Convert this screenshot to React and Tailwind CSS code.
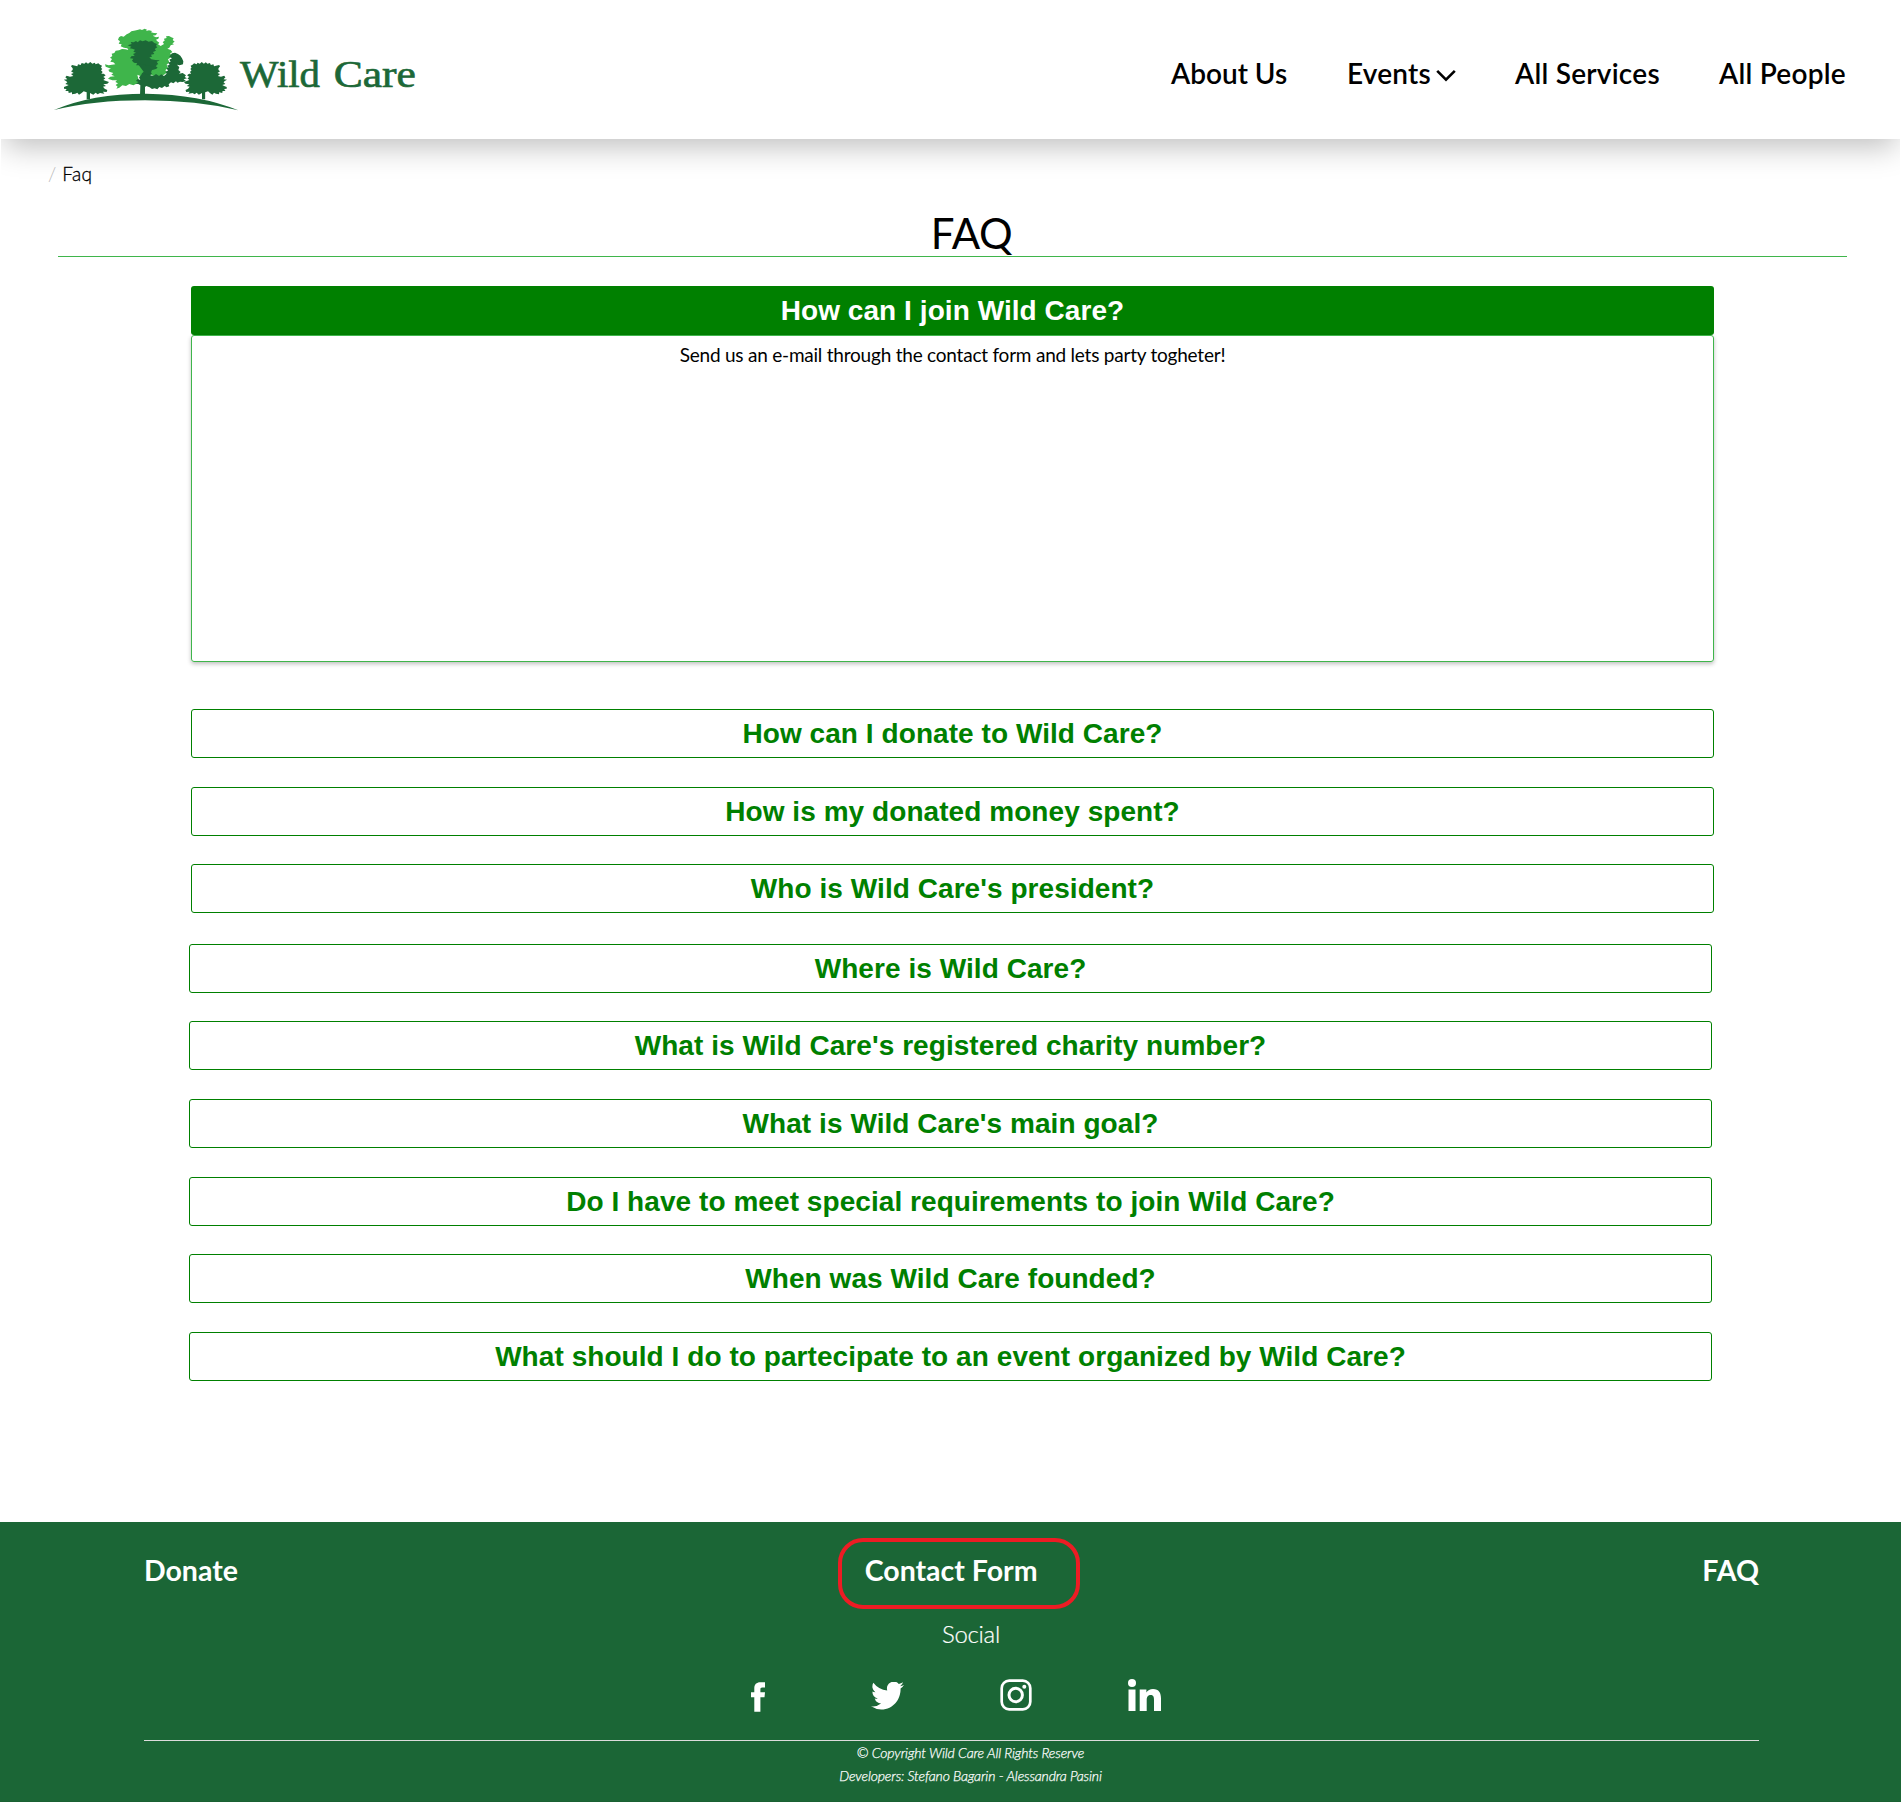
import React from "react";

const firstGroup = [
  { q: "How can I donate to Wild Care?", gap: "mt-[47px]" },
  { q: "How is my donated money spent?", gap: "mt-[29px]" },
  { q: "Who is Wild Care's president?", gap: "mt-7" },
];

const secondGroup = [
  { q: "Where is Wild Care?", gap: "mt-[31px]" },
  { q: "What is Wild Care's registered charity number?", gap: "mt-7" },
  { q: "What is Wild Care's main goal?", gap: "mt-[29px]" },
  { q: "Do I have to meet special requirements to join Wild Care?", gap: "mt-[29px]" },
  { q: "When was Wild Care founded?", gap: "mt-7" },
  { q: "What should I do to partecipate to an event organized by Wild Care?", gap: "mt-[29px]" },
];

const SMALL_TREE =
  "M68 133 L63 127 L66 123 L76 125 L82 127 L84 121 L92 123 L95 117 L103 119 L108 115 L114 119 L121 114 L127 119 L134 116 L137 121 L145 118 L150 122 L156 125 L153 131 L157 135 L153 139 L158 144 L154 149 L161 149 L167 154 L160 159 L166 163 L160 168 L168 171 L177 174 L172 179 L160 181 L168 186 L159 188 L164 194 L172 198 L170 204 L159 203 L163 209 L150 207 L143 211 L137 206 L130 212 L120 207 L120 226 L110 226 L110 205 L101 202 L94 208 L87 212 L82 206 L76 209 L66 211 L66 205 L56 207 L55 201 L46 201 L50 195 L42 194 L42 189 L50 186 L56 183 L46 180 L52 175 L48 171 L41 167 L52 166 L46 160 L50 155 L60 158 L70 156 L63 150 L71 147 L63 142 L68 138 Z";

function Logo() {
  return (
    <svg className="h-[90px] w-[370px]" viewBox="0 0 1110 270">
      <path
        fill="#3fb54b"
        d="M207 40 L213 36 L221 38 L230 31 L238 27 L244 22 L252 20 L262 18 L270 16 L276 18 L284 14 L291 17 L288 21 L297 19 L306 21 L303 25 L312 27 L322 28 L317 34 L308 35 L318 40 L327 38 L325 44 L318 47 L322 52 L328 56 L324 61 L332 66 L342 60 L338 54 L344 50 L342 44 L350 42 L348 37 L357 36 L364 40 L371 43 L368 48 L374 53 L367 58 L372 61 L362 64 L358 71 L352 74 L362 78 L367 84 L360 89 L366 94 L361 101 L354 106 L358 115 L350 122 L354 132 L346 138 L350 146 L342 152 L331 156 L316 160 L300 150 L290 158 L280 160 L262 152 L266 168 L270 176 L258 180 L250 184 L238 180 L228 186 L217 184 L208 191 L199 194 L203 188 L197 183 L204 178 L196 174 L201 169 L187 169 L174 164 L181 158 L194 157 L184 152 L190 147 L178 143 L175 137 L183 134 L167 128 L165 121 L176 124 L186 122 L196 121 L190 115 L181 113 L186 105 L180 101 L187 96 L185 89 L193 87 L197 80 L207 79 L216 75 L226 76 L235 78 L232 73 L222 71 L212 67 L215 61 L206 59 L210 52 L204 47 Z"
      />
      <path
        fill="#1c6837"
        d="M233 64 L245 60 L242 54 L251 55 L258 51 L263 55 L270 49 L278 52 L287 49 L296 53 L306 51 L313 57 L321 60 L318 66 L322 70 L314 75 L318 80 L309 84 L313 90 L303 92 L306 98 L298 100 L304 106 L316 108 L329 109 L324 116 L331 119 L320 122 L326 128 L314 128 L318 134 L307 136 L298 131 L292 134 L284 128 L275 130 L268 124 L258 124 L262 118 L252 116 L246 110 L250 104 L240 103 L244 97 L254 95 L249 90 L258 86 L250 83 L255 77 L247 74 L239 73 L244 68 Z"
      />
      <path
        fill="#1c6837"
        d="M361 94 L366 88 L375 86 L384 90 L391 95 L396 103 L400 112 L399 121 L389 124 L381 122 L388 130 L385 138 L392 144 L387 149 L398 147 L408 154 L404 159 L411 163 L401 166 L408 171 L398 174 L390 173 L382 176 L378 172 L370 178 L363 175 L356 181 L358 187 L350 190 L344 186 L336 192 L328 189 L322 196 L314 193 L306 195 L299 190 L289 186 L285 189 L285 216 L270 216 L271 184 L265 180 L257 179 L266 174 L258 171 L263 165 L271 168 L267 160 L273 154 L276 148 L283 142 L292 146 L298 142 L306 148 L301 154 L310 156 L318 150 L327 156 L334 151 L342 156 L350 149 L345 143 L354 140 L350 133 L356 130 L351 125 L359 122 L354 116 L362 113 L358 107 L366 103 L358 98 Z"
      />
      <path fill="#1c6837" d="M262 118 L312 128 L330 120 L322 134 L306 138 L300 152 L286 150 Z" />
      <path fill="#3fb54b" d="M320 113 L331 109 L342 112 L338 118 L346 122 L340 128 L351 132 L344 138 L349 145 L340 149 L332 146 L328 150 L320 146 L326 140 L315 137 L323 131 L317 126 L325 121 Z" />
      <path fill="#1c6837" d={SMALL_TREE} />
      <path fill="#1c6837" transform="translate(570 0) scale(-0.95 1)" d={SMALL_TREE} />
      <path fill="#1c6837" d="M12 258 Q125 209 288 209 Q450 211 565 259 Q440 229 285 229 Q130 229 12 258 Z" />
      <g fill="#1c6837" stroke="#1c6837" fontFamily="'Liberation Serif', serif" fontSize="116">
        <text x="570" y="189" textLength="240" lengthAdjust="spacingAndGlyphs" strokeWidth="2">Wild</text>
        <text x="851" y="189" textLength="247" lengthAdjust="spacingAndGlyphs" strokeWidth="2">Care</text>
      </g>
    </svg>
  );
}

function Question({ text, gap }) {
  return (
    <button
      className={`${gap} flex h-[49px] w-full items-center justify-center rounded-[3px] border border-[#008000] font-['Liberation_Sans',Arial,sans-serif] text-[28px] leading-8 font-bold tracking-[0.06px] text-[#008000]`}
    >
      {text}
    </button>
  );
}

function Facebook() {
  return (
    <svg className="h-[30px] w-[14px]" viewBox="0 0 14 30" fill="#fff">
      <path d="M14 .3V5.600H11.200C9.800 5.600 9.400 6.300 9.400 7.400V10.300H14L13.500 15.300H9.400V29.700H3.300V15.300H0V10.300H3.300V6.500C3.300 2.400 5.400.3 9.400.3Z" />
    </svg>
  );
}

function Twitter() {
  return (
    <svg className="h-[28px] w-[33px]" viewBox="0 2.500 24 19.600" preserveAspectRatio="none" fill="#fff">
      <path d="M24 4.600a10 10 0 0 1-2.800.8 4.900 4.900 0 0 0 2.100-2.700 9.900 9.900 0 0 1-3.100 1.200A4.900 4.900 0 0 0 11.800 8.400 14 14 0 0 1 1.700 3.100a4.900 4.900 0 0 0 1.500 6.600 4.900 4.900 0 0 1-2.200-.6v.1a4.900 4.900 0 0 0 3.900 4.800 5 5 0 0 1-2.200.1 4.900 4.900 0 0 0 4.600 3.400A9.900 9.900 0 0 1 0 19.500a14 14 0 0 0 7.500 2.200c9.100 0 14-7.500 14-14v-.6A10 10 0 0 0 24 4.600Z" />
    </svg>
  );
}

function Instagram() {
  return (
    <svg className="size-8" viewBox="0 0 32 32" fill="none" stroke="#fff" strokeWidth="2.700">
      <rect x="1.700" y="1.700" width="28.600" height="28.600" rx="7.500" />
      <circle cx="15.700" cy="16" r="6.700" strokeWidth="3" />
      <circle cx="24.300" cy="7.700" r="2" fill="#fff" stroke="none" />
    </svg>
  );
}

function Linkedin() {
  return (
    <svg className="h-8 w-[33px]" viewBox="0 0 33 32" fill="#fff">
      <circle cx="4" cy="4" r="4" />
      <path d="M.5 10.500H7.500V32H.5ZM11.700 10.500H18.400V13.400C19.700 11.200 22 9.900 25 9.900C31 9.900 33 13.700 33 19.600V32H26V21C26 18.100 25.600 15.900 22.700 15.900C19.700 15.900 18.700 18.100 18.700 21V32H11.700Z" />
    </svg>
  );
}

export default function App() {
  return (
    <div className="flex h-[1813px] w-[1901px] flex-col overflow-hidden bg-white font-[Lato,sans-serif] text-black">
      <div className="h-[190px] px-px">
        <div className="h-[190px] overflow-hidden">
          <header className="flex h-[139px] items-start justify-between bg-white pt-6 pr-[54px] pl-[49px] shadow-[0_12px_28px_-4px_rgba(0,0,0,0.25)]">
            <Logo />
            <nav className="flex pt-8 text-[28px] leading-[34px] font-semibold whitespace-nowrap">
              <a className="w-44">About Us</a>
              <a className="flex w-[168px] items-center tracking-[0.200px]">
                Events
                <svg className="mt-1 ml-[5px] h-[13px] w-5" viewBox="0 0 20 13" fill="none" stroke="#000" strokeWidth="2.600">
                  <path d="M1.200 1.800 L10 10.600 L18.800 1.800" />
                </svg>
              </a>
              <a className="w-[204px] tracking-[0.240px]">All Services</a>
              <a className="w-[127px] tracking-[0.240px]">All People</a>
            </nav>
          </header>
          <div className="flex gap-[6px] pt-[23px] pl-[47px] text-[19px] leading-6 font-light">
            <span className="text-[#b5b5b5]">/</span>
            <span className="tracking-[0.400px] [-webkit-text-stroke:0.300px_#000]">Faq</span>
          </div>
        </div>
      </div>

      <main className="h-[1332px]">
        <h1 className="mr-[54px] ml-[58px] h-[67px] border-b border-[#3fb54b] pt-[19px] pl-[38px] text-center text-[42px] leading-[49px] tracking-[-0.300px]">
          FAQ
        </h1>
        <section className="mt-[29px] ml-[191px] w-[1523px]">
          <button className="flex h-[49px] w-full items-center justify-center rounded-[3px] bg-[#008000] font-['Liberation_Sans',Arial,sans-serif] text-[28px] leading-8 font-bold tracking-[0.060px] text-white">
            How can I join Wild Care?
          </button>
          <div className="h-[327px] rounded-[3px] border border-[#3fb54b] pt-2 text-center text-[19px] leading-[22px] tracking-[-0.220px] shadow-[0_2px_4px_rgba(0,0,0,0.25)]">
            Send us an e-mail through the contact form and lets party togheter!
          </div>
          {firstGroup.map((item) => (
            <Question key={item.q} text={item.q} gap={item.gap} />
          ))}
        </section>
        <section className="ml-[189px] w-[1523px]">
          {secondGroup.map((item) => (
            <Question key={item.q} text={item.q} gap={item.gap} />
          ))}
        </section>
      </main>

      <footer className="h-[280px] border-b border-[#1a6133] bg-[#1b6636] pr-[142px] pl-36 text-white">
        <div className="relative flex h-[94px] justify-between pt-[31px] text-[28.500px] leading-[34px] font-bold">
          <a>Donate</a>
          <a className="mr-[38px]">Contact Form</a>
          <a>FAQ</a>
          <div className="absolute top-4 left-[694px] h-[71px] w-[242px] rounded-[25px] border-4 border-[#ed1c24]" />
        </div>
        <div className="h-[63px] pt-[3px] pl-[39px] text-center text-[24px] leading-[30px] font-light tracking-[-0.300px] [-webkit-text-stroke:0.200px_#fff]">Social</div>
        <div className="flex h-[61px] pl-[607px]">
          <a className="w-[120px] pt-[3px]"><Facebook /></a>
          <a className="w-[129px] pt-[3px]"><Twitter /></a>
          <a className="w-[128px]"><Instagram /></a>
          <a><Linkedin /></a>
        </div>
        <div className="border-t border-[#dcdcdc] pl-[38px] text-center text-[14px] leading-[23px] font-light tracking-[-0.140px] italic [-webkit-text-stroke:0.250px_#fff]">
          <p>© Copyright Wild Care All Rights Reserve</p>
          <p>Developers: Stefano Bagarin - Alessandra Pasini</p>
        </div>
      </footer>
    </div>
  );
}
